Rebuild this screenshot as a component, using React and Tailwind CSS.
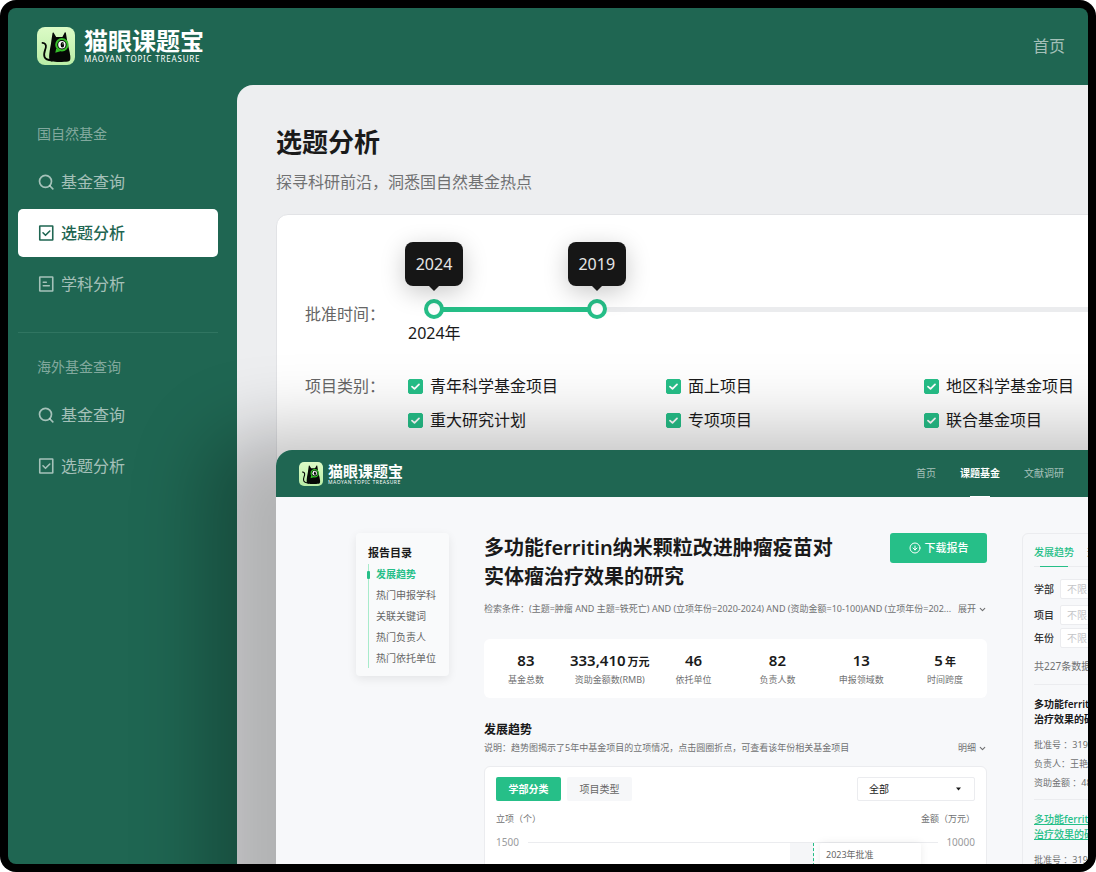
import React, { useState } from "react";
import clsx from "clsx";
import { ChevronDown, CircleArrowDown } from "lucide-react";

const YEARS = [2024, 2019, 2014, 2009, 2004];

const CATEGORIES = ["青年科学基金项目", "面上项目", "地区科学基金项目", "重大研究计划", "专项项目", "联合基金项目"];

const STATS = [
  { value: "83", label: "基金总数" },
  { value: "333,410", unit: "万元", label: "资助金额数(RMB)" },
  { value: "46", label: "依托单位" },
  { value: "82", label: "负责人数" },
  { value: "13", label: "申报领域数" },
  { value: "5", unit: "年", label: "时间跨度" },
];

const CATALOG = ["发展趋势", "热门申报学科", "关联关键词", "热门负责人", "热门依托单位"];

const CatLogo = ({ className }) => (
  <svg className={className} viewBox="0 0 38 38" fill="none">
    <defs>
      <linearGradient id="catBg" x1="0" y1="0" x2="0" y2="1">
        <stop offset="0" stopColor="#dcfbc6" />
        <stop offset="1" stopColor="#b9eda6" />
      </linearGradient>
    </defs>
    <rect width="38" height="38" rx="8" fill="url(#catBg)" />
    <path d="M5.500 15.800c2.600.2 3.900 2.200 3.300 4.800-.8 3.300-2.600 6.200-1.300 9.300 1 2.500 3.600 3.300 7.500 3.400" stroke="#050805" strokeWidth="1.800" strokeLinecap="round" />
    <path d="M14.500 34.500c-2.400-.6-2.600-3.600-2.200-7.500.5-5 1.600-8.500 2.100-13.500l1.100-7.300c.1-.9.900-1 1.300-.3l2.400 4.100h6.200l2.200-4.200c.4-.7 1.200-.5 1.300.3l1.200 7.400c.8 5 2.700 10.500 3.200 15.500.3 3.500 0 5.200-2.300 5.500-4 .5-12.500.6-16.500 0z" fill="#050805" />
    <path d="M19.200 21.500l-.9 4.300 5-1.600" fill="#37c02b" />
    <circle cx="24.900" cy="17.700" r="5.700" stroke="#37c02b" strokeWidth="2" />
    <circle cx="24.900" cy="17.700" r="3.700" fill="#fff" />
    <ellipse cx="25.400" cy="17.700" rx="1.800" ry="2.700" fill="#050805" />
    <circle cx="26" cy="16.800" r="0.600" fill="#fff" />
  </svg>
);

const SearchIcon = () => (
  <svg className="w-4 h-4" viewBox="0 0 16 16" fill="none" stroke="currentColor" strokeWidth="1.700" strokeLinecap="round">
    <circle cx="7.500" cy="7.300" r="6" />
    <path d="M12 12l2.800 2.800" />
  </svg>
);

const CheckSquareIcon = () => (
  <svg className="w-4 h-4" viewBox="0 0 16 16" fill="none" stroke="currentColor" strokeWidth="1.600" strokeLinecap="round" strokeLinejoin="round">
    <rect x="1.750" y="1" width="13" height="14" rx="0.300" />
    <path d="M5 7.800l2.500 2.500 4.300-4.300" />
  </svg>
);

const ListSquareIcon = () => (
  <svg className="w-4 h-4" viewBox="0 0 16 16" fill="none" stroke="currentColor" strokeWidth="1.600" strokeLinecap="round" strokeLinejoin="round">
    <rect x="1.750" y="1" width="13" height="14" rx="0.300" />
    <path d="M5.300 6.300h3M5.300 9.800h6" />
  </svg>
);

const NavItem = ({ icon, active, children }) => (
  <a
    href="#"
    className={clsx(
      "flex items-center gap-[7px] h-12 pl-5 rounded-[5px] text-base",
      active ? "bg-white text-[#1f6652] font-medium" : "text-white/60"
    )}
  >
    {icon}
    {children}
  </a>
);

const Sidebar = () => (
  <nav className="w-[229px] shrink-0 pl-2.5 pr-[19px] pt-[39px]">
    <h2 className="pl-[19px] text-sm leading-5 text-white/45">国自然基金</h2>
    <div className="flex flex-col gap-[3px] mt-3.5">
      <NavItem icon={<SearchIcon />}>基金查询</NavItem>
      <NavItem icon={<CheckSquareIcon />} active>选题分析</NavItem>
      <NavItem icon={<ListSquareIcon />}>学科分析</NavItem>
    </div>
    <hr className="my-6 border-[#307561]" />
    <h2 className="pl-[19px] text-sm leading-5 text-white/45">海外基金查询</h2>
    <div className="flex flex-col gap-[3px] mt-3.5">
      <NavItem icon={<SearchIcon />}>基金查询</NavItem>
      <NavItem icon={<CheckSquareIcon />}>选题分析</NavItem>
    </div>
  </nav>
);

const YearSlider = () => {
  const [range, setRange] = useState([0, 1]);
  const last = YEARS.length - 1;
  const position = (step) => `calc(10px + (100% - 20px) * ${step / last})`;
  const change = (index) => (e) => {
    const next = [...range];
    next[index] = Number(e.target.value);
    setRange(next);
  };
  return (
    <div className="relative h-5 ml-4">
      <div className="absolute left-2.5 right-0 top-2 h-[5px] bg-[#ebecee]" />
      <div
        className="absolute top-2 h-[5px] bg-[#26bf88]"
        style={{ left: position(range[0]), right: `calc(100% - ${position(range[1])})` }}
      />
      {range.map((step, index) => (
        <React.Fragment key={index}>
          <input
            type="range"
            aria-label={index === 0 ? "起始年份" : "结束年份"}
            min="0"
            max={last}
            value={step}
            onChange={change(index)}
            className="absolute inset-0 w-full h-5 appearance-none bg-transparent pointer-events-none [&::-webkit-slider-thumb]:appearance-none [&::-webkit-slider-thumb]:pointer-events-auto [&::-webkit-slider-thumb]:w-5 [&::-webkit-slider-thumb]:h-5 [&::-webkit-slider-thumb]:rounded-full [&::-webkit-slider-thumb]:border-4 [&::-webkit-slider-thumb]:border-solid [&::-webkit-slider-thumb]:border-[#26bf88] [&::-webkit-slider-thumb]:bg-white"
          />
          <div
            className="absolute bottom-[33px] -translate-x-1/2 w-[58px] h-11 rounded-lg bg-[#161616] text-[#e6e6e6] text-base flex items-center justify-center shadow-[0_6px_24px_rgba(0,0,0,0.22)]"
            style={{ left: position(step) }}
          >
            {YEARS[step]}
            <svg className="absolute top-full left-6 w-2.5 h-[5px]" viewBox="0 0 10 5"><path d="M0 0h10L5 5z" fill="#161616" /></svg>
          </div>
        </React.Fragment>
      ))}
    </div>
  );
};

const CategoryBox = ({ label }) => {
  const [checked, setChecked] = useState(true);
  return (
    <label className="flex items-center gap-[7px] text-base leading-6 text-[#1a1a1a]">
      <span className="relative w-[15px] h-[15px]">
        <input
          type="checkbox"
          checked={checked}
          onChange={() => setChecked(!checked)}
          className="block appearance-none w-[15px] h-[15px] rounded-[2px] border border-[#26bf88] checked:bg-[#26bf88]"
        />
        {checked && (
          <svg className="absolute inset-0 pointer-events-none text-white" viewBox="0 0 15 15" fill="none" stroke="currentColor" strokeWidth="1.800" strokeLinecap="round" strokeLinejoin="round"><path d="M4 7.600l2.500 2.300L11 5.400" /></svg>
        )}
      </span>
      {label}
    </label>
  );
};

const TopicAnalysis = () => (
  <main className="flex-1 min-w-0 overflow-hidden rounded-tl-2xl bg-[#edeef0] pl-[39px] pt-[39px]">
    <h1 className="text-[26px] leading-9 font-semibold text-[#1a1a1a]">选题分析</h1>
    <p className="mt-2.5 text-base leading-6 text-[#707172]">探寻科研前沿，洞悉国自然基金热点</p>
    <section className="mt-5 -mr-8 h-full rounded-xl border border-[#e2e3e6] bg-white pl-7 pr-6 pt-[84px]">
      <div className="flex">
        <div className="w-[103px] shrink-0 mt-[3px] text-base leading-6 text-[#666]">批准时间：</div>
        <div className="flex-1">
          <YearSlider />
          <div className="mt-0.5 text-base leading-6 text-[#1a1a1a]">2024年</div>
        </div>
      </div>
      <div className="flex mt-[29px]">
        <div className="w-[103px] shrink-0 text-base leading-6 text-[#666]">项目类别：</div>
        <div className="grid grid-cols-[258px_258px_258px] gap-y-2.5">
          {CATEGORIES.map((label) => <CategoryBox key={label} label={label} />)}
        </div>
      </div>
    </section>
  </main>
);

const Catalog = () => (
  <aside className="w-[93px] shrink-0 h-[143px] rounded bg-[#f9fafb] pl-3 pt-3 shadow-[0_3px_10px_rgba(0,0,0,0.08)]">
    <h3 className="text-[11px] leading-4 font-semibold text-[#1a1a1a]">报告目录</h3>
    <ul className="relative mt-[3px] border-l border-[#a8ebcb] text-[10px]">
      {CATALOG.map((item, index) => (
        <li key={item} className="h-[21px] last:h-5 pl-[7px] flex items-center">
          {index === 0 && <span className="absolute -left-0.5 w-[3px] h-2 rounded-[1px] bg-[#26bf88]" />}
          <a href="#" className={index === 0 ? "text-[#26bf88] font-semibold" : "text-[#666]"}>{item}</a>
        </li>
      ))}
    </ul>
  </aside>
);

const TrendCard = () => (
  <div className="mt-3 h-[260px] rounded-md border border-[#ebecef] bg-white px-[11px] pt-2.5">
    <div className="flex items-center gap-1.5 text-[10px]">
      <button className="w-[65px] h-6 rounded-[2px] bg-[#26bf88] text-white font-semibold">学部分类</button>
      <button className="w-[65px] h-6 rounded-[2px] bg-[#f6f7f9] text-[#666]">项目类型</button>
      <div className="relative ml-auto">
        <select aria-label="学部" className="appearance-none w-[118px] h-6 pl-[11px] rounded-[2px] border border-[#ebecef] bg-white text-[10px] text-[#1a1a1a]">
          <option>全部</option>
        </select>
        <svg className="absolute right-3.5 top-2.5 w-[5px] h-1 pointer-events-none" viewBox="0 0 5 4"><path d="M0 .5h5L2.500 3.500z" fill="#1a1a1a" /></svg>
      </div>
    </div>
    <div className="flex justify-between mt-3 text-[9px] leading-3 text-[#707172]">
      <span>立项（个）</span>
      <span>金额（万元）</span>
    </div>
    <div className="flex gap-2 mt-[11px] text-[10px] leading-3 text-[#9a9b9d]">
      <span className="w-6">1500</span>
      <div className="relative flex-1 mt-1.5 h-40 border-t border-[#ebecef]">
        <div className="absolute left-[262px] top-0 w-6 h-full bg-[#f5f6f8] border-r border-dashed border-r-[#26bf88]" />
        <div className="absolute left-[292px] top-0 w-[101px] h-full rounded-[2px] bg-white px-1.5 pt-1.5 text-[9px] text-[#666] shadow-[0_0_8px_rgba(0,0,0,0.08)]">2023年批准</div>
      </div>
      <span>10000</span>
    </div>
  </div>
);

const Report = () => (
  <article className="w-[503px] shrink-0">
    <div className="flex items-start justify-between">
      <h2 className="text-xl leading-[29px] font-semibold text-[#1a1a1a]">多功能ferritin纳米颗粒改进肿瘤疫苗对<br />实体瘤治疗效果的研究</h2>
      <button className="flex items-center justify-center gap-1 w-[97px] h-[30px] shrink-0 rounded-[3px] bg-[#26bf88] text-white text-[11px] font-medium">
        <CircleArrowDown size={12} strokeWidth={2} />下载报告
      </button>
    </div>
    <div className="flex items-center justify-between mt-3 text-[9px] leading-3 text-[#707172] whitespace-nowrap">
      <p>检索条件：(主题=肿瘤 AND 主题=铁死亡) AND (立项年份=2020-2024) AND (资助金额=10-100)AND (立项年份=202...</p>
      <button className="flex items-center gap-0.5 shrink-0">展开<ChevronDown size={9} strokeWidth={3} /></button>
    </div>
    <dl className="grid grid-cols-6 mt-6 h-[59px] pt-[11px] rounded-md bg-white text-center whitespace-nowrap">
      {STATS.map(({ value, unit, label }) => (
        <div key={label} className="flex flex-col-reverse justify-end gap-1">
          <dt className="text-[9px] leading-3 text-[#707172]">{label}</dt>
          <dd className="h-5 text-[15px] leading-5 font-semibold text-[#1a1a1a]">{value}{unit && <span className="ml-0.5 text-[11px] leading-none">{unit}</span>}</dd>
        </div>
      ))}
    </dl>
    <h3 className="mt-6 text-xs leading-4 font-semibold text-[#1a1a1a]">发展趋势</h3>
    <div className="flex justify-between mt-1 text-[9px] leading-3 text-[#707172]">
      <p>说明：趋势图揭示了5年中基金项目的立项情况，点击圆圈折点，可查看该年份相关基金项目</p>
      <button className="flex items-center gap-0.5">明细<ChevronDown size={9} strokeWidth={3} /></button>
    </div>
    <TrendCard />
  </article>
);

const FilterField = ({ id, label }) => (
  <div className="flex items-center gap-1.5">
    <label htmlFor={id} className="text-[10px] font-medium text-[#333]">{label}</label>
    <input id={id} placeholder="不限" className="w-24 h-5 px-1.5 rounded-[2px] border border-[#ebecef] bg-white text-[10px] placeholder:text-[#c4c5c8]" />
  </div>
);

const ProjectTitle = ({ linked }) => (
  <h4 className={clsx("pt-3 text-[10px] leading-[15px]", linked ? "font-medium text-[#26bf88] underline" : "font-semibold text-[#1a1a1a]")}>
    <a href="#">多功能ferrit<br />治疗效果的研</a>
  </h4>
);

const ResultPanel = () => (
  <aside className="w-[220px] shrink-0 h-[500px] rounded-md border border-[#ebecef] pl-[11px] pt-2 whitespace-nowrap">
    <div className="flex gap-[13px] border-b border-[#ebecef] text-[10px] leading-5">
      <button className="relative h-6 pb-1 font-medium text-[#26bf88]">
        发展趋势
        <span className="absolute left-1.5 right-1.5 -bottom-px h-px bg-[#26bf88]" />
      </button>
      <button className="h-6 pb-1 text-[#707172]">热门</button>
    </div>
    <div className="mt-3">
      <FilterField id="department" label="学部" />
      <div className="mt-1.5"><FilterField id="project" label="项目" /></div>
      <div className="mt-[3px]"><FilterField id="year" label="年份" /></div>
    </div>
    <p className="mt-3 pb-3 border-b border-[#ebecef] text-[10px] leading-3 text-[#707172]">共227条数据</p>
    <ProjectTitle />
    <div className="mt-2 pb-[7px] border-b border-[#ebecef] text-[9px] leading-[19px] text-[#707172]">
      <p>批准号 ：3190</p>
      <p>负责人：王艳</p>
      <p>资助金额 ：48</p>
    </div>
    <ProjectTitle linked />
    <p className="mt-2 text-[9px] leading-[19px] text-[#707172]">批准号 ：3190</p>
  </aside>
);

const ReportWindow = () => (
  <div className="absolute left-[268px] top-[442px] -right-40 -bottom-40 overflow-hidden rounded-tl-2xl bg-[#f7f8fa] shadow-[0_52px_72px_72px_rgba(0,0,0,0.25)]">
    <header className="flex items-center h-[47px] pl-[23px] pr-[184px] bg-[#1f6652]">
      <CatLogo className="w-6 h-6 mr-[5px]" />
      <div className="text-white">
        <div className="text-[15px] leading-4 font-bold">猫眼课题宝</div>
        <div className="text-[5px] leading-[6px] tracking-widest">MAOYAN TOPIC TREASURE</div>
      </div>
      <nav className="flex gap-6 ml-auto h-full text-[10px] text-white/60">
        <a href="#" className="flex items-center">首页</a>
        <a href="#" className="relative flex items-center font-bold text-white">
          课题基金
          <span className="absolute bottom-0 left-2.5 right-2.5 h-px bg-white" />
        </a>
        <a href="#" className="flex items-center">文献调研</a>
      </nav>
    </header>
    <div className="flex items-start gap-[35px] pl-20 pt-9">
      <Catalog />
      <Report />
      <ResultPanel />
    </div>
  </div>
);

const App = () => (
  <div className="h-screen overflow-hidden rounded-2xl bg-black p-2 font-['Noto_Sans','Noto_Sans_CJK_SC',sans-serif]">
    <div className="relative flex flex-col h-full overflow-hidden rounded-lg bg-[#1f6652]">
      <header className="flex items-center justify-between h-[77px] shrink-0 pl-[29px] pr-[23px] pb-px">
        <div className="flex items-center gap-[9px] text-white">
          <CatLogo className="w-[38px] h-[38px]" />
          <div>
            <div className="text-2xl leading-[26px] font-bold">猫眼课题宝</div>
            <div className="text-[8px] leading-[10px] tracking-widest">MAOYAN TOPIC TREASURE</div>
          </div>
        </div>
        <a href="#" className="text-base text-white/60">首页</a>
      </header>
      <div className="flex flex-1 min-h-0">
        <Sidebar />
        <TopicAnalysis />
      </div>
      <ReportWindow />
    </div>
  </div>
);

export default App;
